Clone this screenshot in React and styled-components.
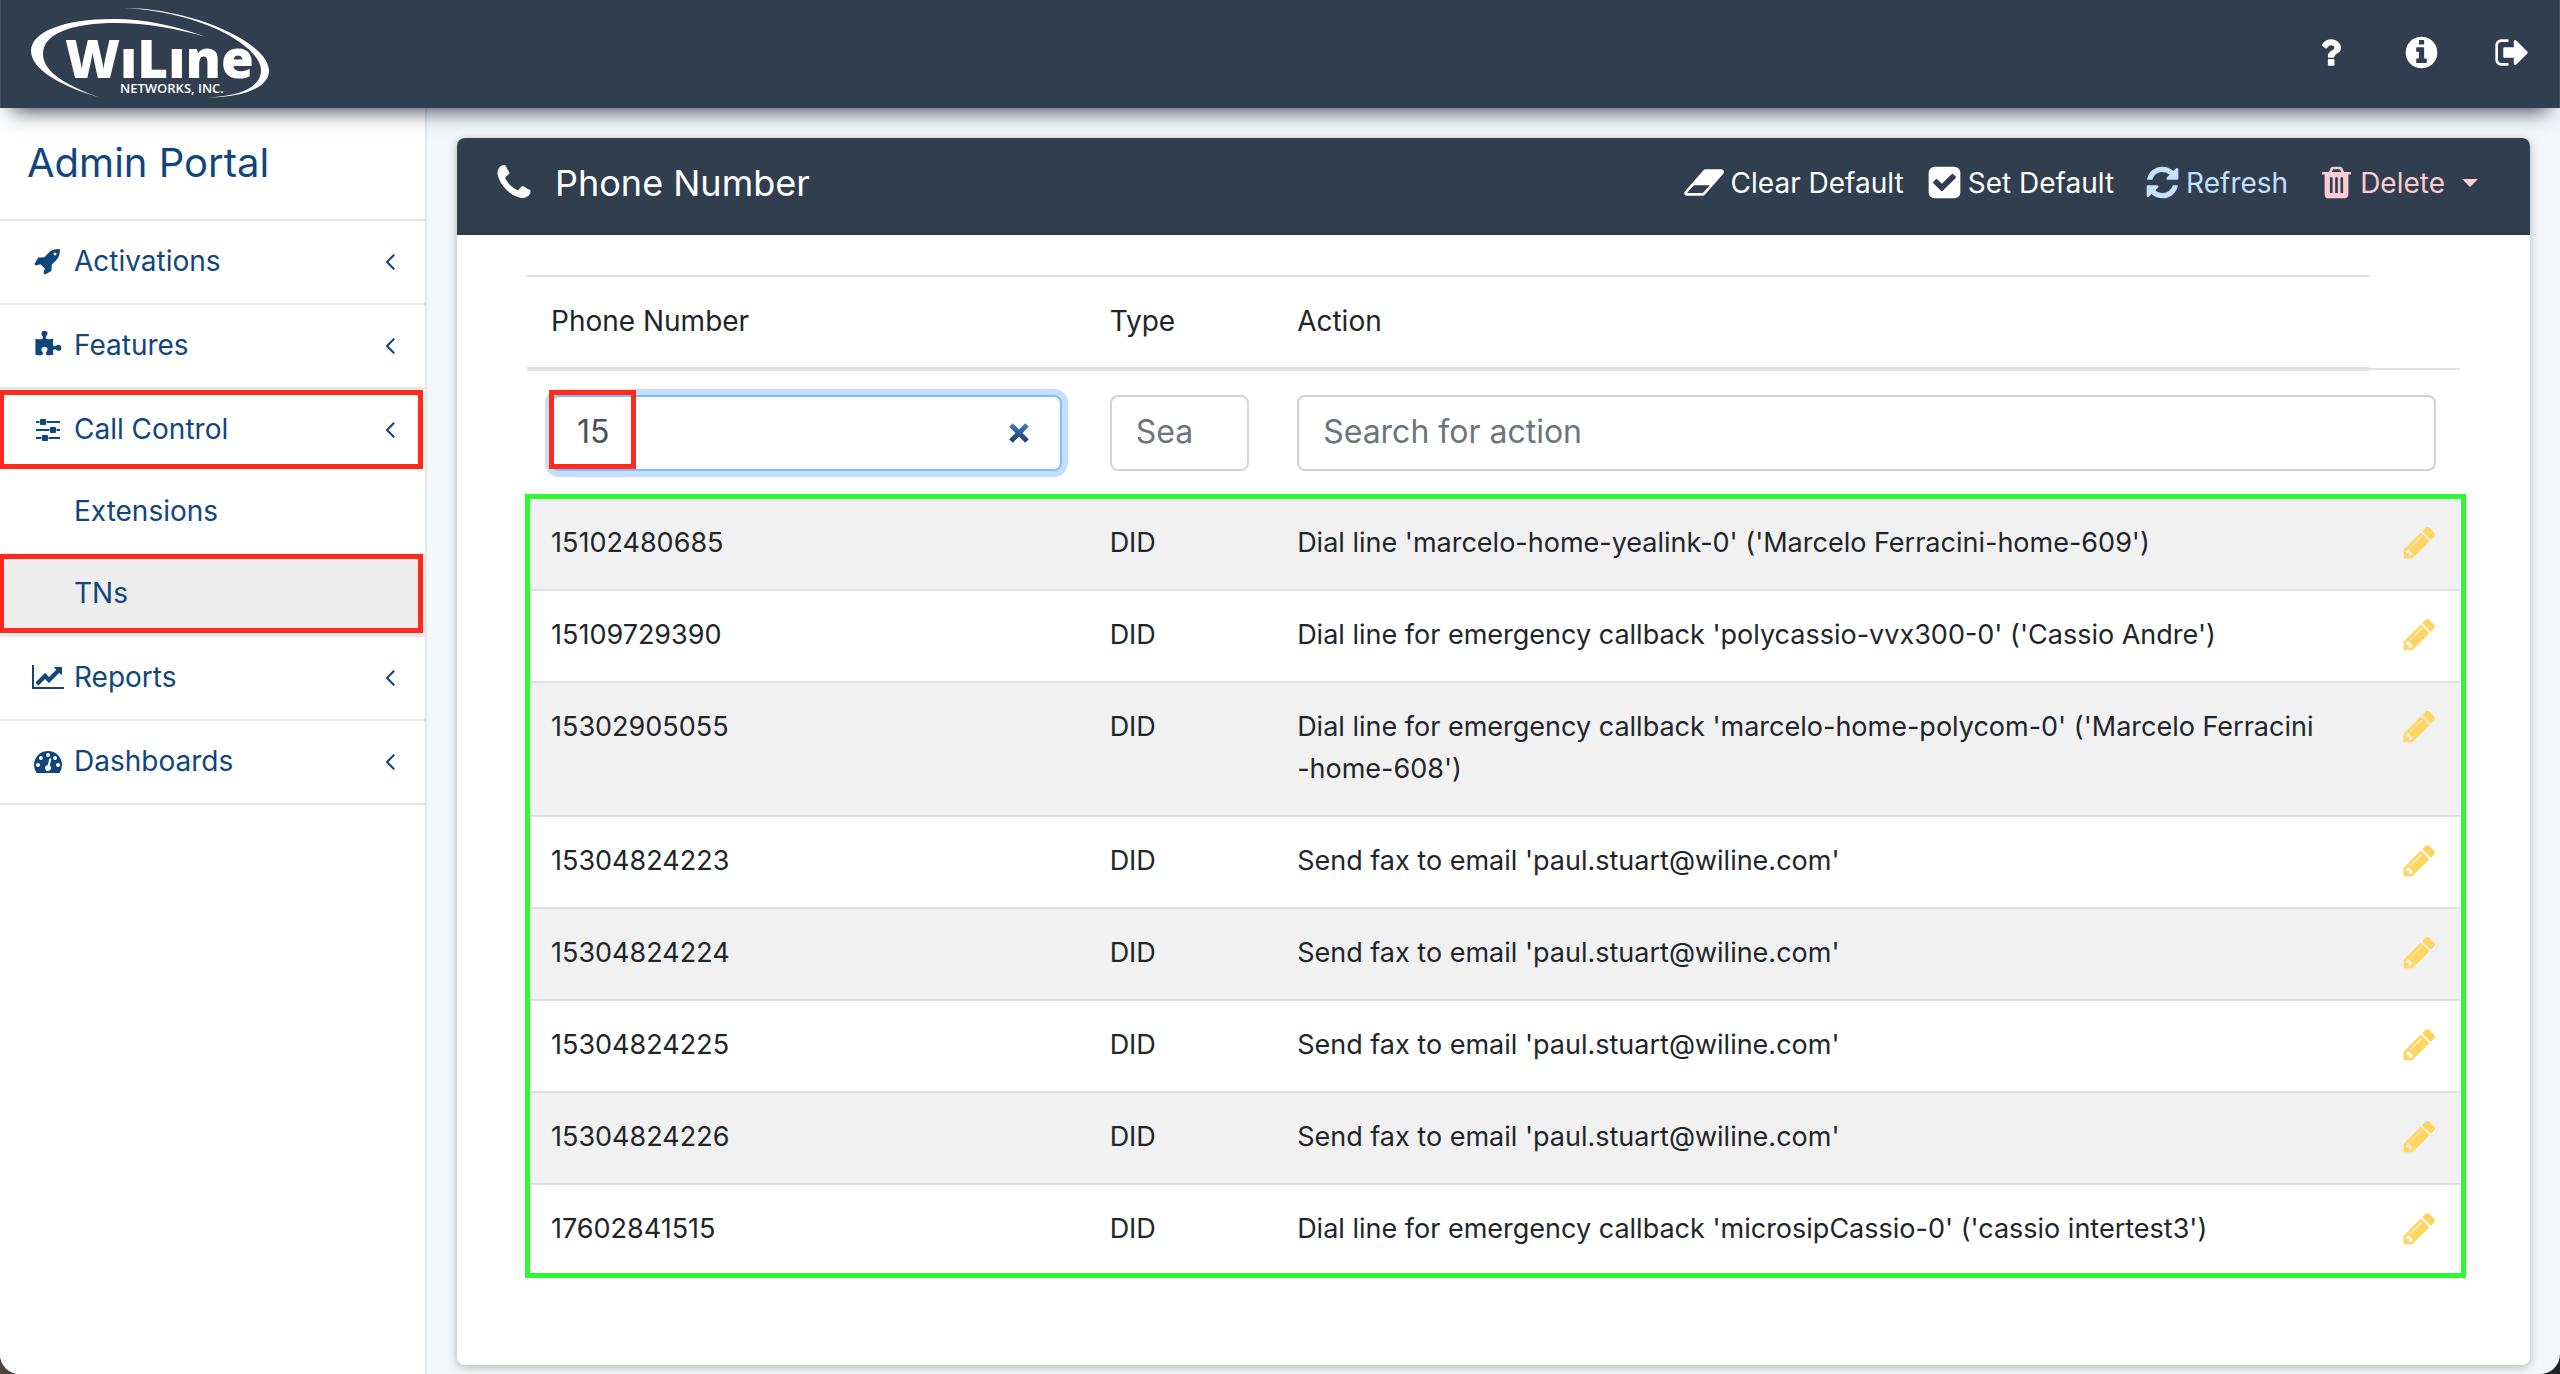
import React, { useState } from 'react'
import styled, { createGlobalStyle, css } from 'styled-components'

const NAVY = '#303e4f'
const BLUE = '#11457e'
const INK = '#212529'
const LINE = '#dee2e6'
const RED = '#ff2a1c'
const GREEN = '#2bfa2e'

const GlobalStyle = createGlobalStyle`
  *, *::before, *::after {
    box-sizing: border-box;
  }

  html {
    background: linear-gradient(90deg, #4b443f, #232425);
  }

  body {
    margin: 0;
    color: ${INK};
    font-family: Inter, "Liberation Sans", sans-serif;
    font-size: 28px;
    line-height: 42px;
  }

  button, input {
    font: inherit;
  }
`

// glyphs are drawn on a 1792 unit em, [width, path]
const glyphs = {
  question: [1792, 'M1088 1256v240q0 16-12 28t-28 12h-240q-16 0-28-12t-12-28v-240q0-16 12-28t28-12h240q16 0 28 12t12 28zm316-600q0 54-15.500 101t-35 76.500-55 59.500-57.500 43.500-61 35.500q-41 23-68.500 65t-27.500 67q0 17-12 32.500t-28 15.500h-240q-15 0-25.500-18.500t-10.500-37.500v-45q0-83 65-156.500t143-108.500q59-27 84-56t25-76q0-42-46.500-74t-107.500-32q-65 0-108 29-35 25-107 115-13 16-31 16-12 0-25-8l-164-125q-13-10-15.500-25t5.500-28q160-266 464-266 80 0 161 31t146 83 106 127.500 41 158.500z'],
  info: [1792, 'M1152 1376v-160q0-14-9-23t-23-9h-96v-512q0-14-9-23t-23-9h-320q-14 0-23 9t-9 23v160q0 14 9 23t23 9h96v320h-96q-14 0-23 9t-9 23v160q0 14 9 23t23 9h448q14 0 23-9t9-23zm-128-896v-160q0-14-9-23t-23-9h-192q-14 0-23 9t-9 23v160q0 14 9 23t23 9h192q14 0 23-9t9-23zm640 416q0 209-103 385.500t-279.500 279.500-385.500 103-385.500-103-279.500-279.500-103-385.500 103-385.500 279.500-279.500 385.500-103 385.500 103 279.500 279.500 103 385.500z'],
  signOut: [1792, 'M704 1440q0 4 1 20t.5 26.500-3 23.500-10 19.500-20.500 6.500h-320q-119 0-203.500-84.500t-84.500-203.500v-704q0-119 84.500-203.500t203.500-84.500h320q13 0 22.500 9.500t9.500 22.500q0 4 1 20t.5 26.500-3 23.500-10 19.500-20.500 6.500h-320q-66 0-113 47t-47 113v704q0 66 47 113t113 47h312l11.500 1 11.500 3 8 5.500 7 9 2 13.500zm928-544q0 26-19 45l-544 544q-19 19-45 19t-45-19-19-45v-288h-448q-26 0-45-19t-19-45v-384q0-26 19-45t45-19h448v-288q0-26 19-45t45-19 45 19l544 544q19 19 19 45z'],
  pencil: [1792, 'M491 1536l91-91-235-235-91 91v107h128v128h107zm523-928q0-22-22-22-10 0-17 7l-542 542q-7 7-7 17 0 22 22 22 10 0 17-7l542-542q7-7 7-17zm-54-192l416 416-832 832h-416v-416zm683 96q0 53-37 90l-166 166-416-416 166-165q36-38 90-38 53 0 91 38l235 234q37 39 37 91z'],
  phone: [1792, 'M1600 1240q0 27-10 70.500t-21 68.500q-21 50-122 106-94 51-186 51-27 0-52.500-3.500t-57.500-12.500-47.500-14.500-55.500-20.500-49-18q-98-35-175-83-128-79-264.500-215.500t-215.500-264.500q-48-77-83-175-3-9-18-49t-20.500-55.500-14.500-47.500-12.500-57.500-3.500-52.500q0-92 51-186 56-101 106-122 25-11 68.500-21t70.500-10q14 0 21 3 18 6 53 76 11 19 30 54t35 63.500 31 53.500q3 4 17.500 25t21.500 35.500 7 28.500q0 20-28.500 50t-62 55-62 53-28.500 46q0 9 5 22.500t8.500 20.500 14 24 11.500 19q76 137 174 235t235 174q2 1 19 11.500t24 14 20.500 8.500 22.500 5q18 0 46-28.500t53-62 55-62 50-28.500q14 0 28.500 7t35.500 21.500 25 17.500q25 15 53.500 31t63.500 35 54 30q70 35 76 53 3 7 3 21z'],
  check: [1792, 'M813 1299l614-614q19-19 19-45t-19-45l-102-102q-19-19-45-19t-45 19l-467 467-211-211q-19-19-45-19t-45 19l-102 102q-19 19-19 45t19 45l358 358q19 19 45 19t45-19zm851-883v960q0 119-84.500 203.500t-203.500 84.500h-960q-119 0-203.500-84.500t-84.500-203.500v-960q0-119 84.500-203.500t203.500-84.500h960q119 0 203.500 84.500t84.500 203.500z'],
  refresh: [1792, 'M1639 1056q0 5-1 7-64 268-268 434.500t-478 166.500q-146 0-282.500-55t-243.500-157l-129 129q-19 19-45 19t-45-19-19-45v-448q0-26 19-45t45-19h448q26 0 45 19t19 45-19 45l-137 137q71 66 161 102t187 36q134 0 250-65t186-179q11-17 53-117 8-23 30-23h192q13 0 22.500 9.500t9.500 22.500zm25-800v448q0 26-19 45t-45 19h-448q-26 0-45-19t-19-45 19-45l138-138q-148-137-349-137-134 0-250 65t-186 179q-11 17-53 117-8 23-30 23h-199q-13 0-22.500-9.500t-9.500-22.500v-7q65-268 270-434.500t480-166.500q146 0 284 55.500t245 156.500l130-129q19-19 45-19t45 19 19 45z'],
  eraser: [2048, 'M960 1408l336-384h-768l-336 384h768zm1013-1077q15 34 9.500 71.500t-30.500 65.500l-896 1024q-38 44-96 44h-768q-38 0-69.500-20.500t-47.500-54.500q-15-34-9.500-71.500t30.500-65.500l896-1024q38-44 96-44h768q38 0 69.500 20.500t47.500 54.500z'],
  trash: [1792, 'M704 1376v-704q0-14-9-23t-23-9h-64q-14 0-23 9t-9 23v704q0 14 9 23t23 9h64q14 0 23-9t9-23zm256 0v-704q0-14-9-23t-23-9h-64q-14 0-23 9t-9 23v704q0 14 9 23t23 9h64q14 0 23-9t9-23zm256 0v-704q0-14-9-23t-23-9h-64q-14 0-23 9t-9 23v704q0 14 9 23t23 9h64q14 0 23-9t9-23zm-544-992h448l-48-117q-7-9-17-11h-317q-10 2-17 11zm928 32v64q0 14-9 23t-23 9h-96v948q0 83-47 143.500t-113 60.500h-832q-66 0-113-58.500t-47-141.500v-952h-96q-14 0-23-9t-9-23v-64q0-14 9-23t23-9h309l70-167q15-37 54-63t79-26h320q40 0 79 26t54 63l70 167h309q14 0 23 9t9 23z'],
  chart: [2048, 'M2048 1536v128h-2048v-1536h128v1408h1920zm-128-1248v435q0 21-19.500 29.500t-35.500-7.500l-121-121-633 633q-10 10-23 10t-23-10l-233-233-416 416-192-192 585-585q10-10 23-10t23 10l233 233 464-464-121-121q-16-16-7.500-35.500t29.500-19.500h435q14 0 23 9t9 23z'],
  rocket: [1792, 'M1440 448q0-40-28-68t-68-28-68 28-28 68 28 68 68 28 68-28 28-68zm224-288q0 249-75.500 430.500t-253.500 360.500q-81 80-195 176l-20 379q-2 16-16 26l-384 224q-7 4-16 4-12 0-23-9l-64-64q-13-14-8-32l85-276-281-281-276 85q-3 1-9 1-14 0-23-9l-64-64q-17-19-5-39l224-384q10-14 26-16l379-20q96-114 176-195 188-187 358-258t431-71q14 0 24 9.500t10 22.500z'],
  sliders: [1536, 'M352 1408v128h-352v-128h352zm352-128q26 0 45 19t19 45v256q0 26-19 45t-45 19h-256q-26 0-45-19t-19-45v-256q0-26 19-45t45-19h256zm160-384v128h-864v-128h864zm-640-512v128h-224v-128h224zm1312 1024v128h-736v-128h736zm-960-1152q26 0 45 19t19 45v256q0 26-19 45t-45 19h-256q-26 0-45-19t-19-45v-256q0-26 19-45t45-19h256zm640 512q26 0 45 19t19 45v256q0 26-19 45t-45 19h-256q-26 0-45-19t-19-45v-256q0-26 19-45t45-19h256zm320 128v128h-224v-128h224zm0-512v128h-864v-128h864z'],
  gauge: [1792, 'M384 1152q0-53-37.500-90.500t-90.500-37.500-90.500 37.500-37.500 90.500 37.500 90.500 90.500 37.500 90.500-37.500 37.500-90.500zm192-448q0-53-37.500-90.500t-90.500-37.500-90.500 37.500-37.500 90.500 37.500 90.500 90.500 37.500 90.500-37.500 37.500-90.500zm428 481l101-382q6-26-7.500-48.500t-38.500-29.500-48 6.500-30 39.500l-101 382q-60 5-107 43.500t-63 98.500q-20 77 20 146t117 89 146-20 89-117q16-60-6-117t-72-91zm660-33q0-53-37.500-90.500t-90.500-37.500-90.500 37.500-37.500 90.500 37.500 90.500 90.500 37.500 90.500-37.500 37.500-90.500zm-640-640q0-53-37.500-90.500t-90.500-37.500-90.500 37.500-37.500 90.500 37.500 90.500 90.500 37.500 90.500-37.500 37.500-90.500zm448 192q0-53-37.500-90.500t-90.500-37.500-90.500 37.500-37.500 90.500 37.500 90.500 90.500 37.500 90.500-37.500 37.500-90.500zm320 448q0 261-141 483-19 29-54 29h-1402q-35 0-54-29-141-221-141-483 0-182 71-348t191-286 286-191 348-71 348 71 286 191 191 286 71 348z'],
  puzzle: [1792, 'M1755 1083q0 81-44.500 135t-123.500 54q-41 0-77.500-17.500t-59-38-56.500-38-71-17.500q-110 0-110 124 0 39 16 115t15 115v5q-22 0-33 1-34 3-97.500 11.500t-115.500 13.500-98 5q-61 0-103-26.500t-42-83.500q0-37 17.500-71t38-56.500 38-59 17.500-77.500q0-79-54-123.500t-135-44.500q-84 0-143 45.500t-59 127.500q0 43 15 83t33.500 64.500 33.500 53 15 50.500q0 45-46 89-37 35-117 35-95 0-245-24-9-2-27.500-4t-27.500-4l-13-2q-1 0-3-1-2 0-2-1v-1024q2 1 17.500 3.500t34 5 21.500 3.500q150 24 245 24 80 0 117-35 46-44 46-89 0-22-15-50.500t-33.500-53-33.500-64.500-15-83q0-82 59-127.500t144-45.500q80 0 134 44.500t54 123.500q0 41-17.500 77.500t-38 59-38 56.500-17.500 71q0 57 42 83.500t103 26.500q64 0 180-15t163-17v2q-1 2-3.500 17.500t-5 34-3.500 21.500q-24 150-24 245 0 80 35 117 44 46 89 46 22 0 50.500-15t53-33.500 64.500-33.500 83-15q82 0 127.500 59t45.500 143z'],
  angleLeft: [1792, 'M1203 544q0 13-10 23l-393 393 393 393q10 10 10 23t-10 23l-50 50q-10 10-23 10t-23-10l-466-466q-10-10-10-23t10-23l466-466q10-10 23-10t23 10l50 50q10 10 10 23z'],
}

const Glyph = styled.svg`
  display: block;
  flex: none;
  height: ${({ $size }) => $size}px;
  fill: currentColor;
`

const Icon = ({ name, size = 28 }) => {
  const [width, path] = glyphs[name]
  return (
    <Glyph $size={size} viewBox={`0 0 ${width} 1792`} aria-hidden="true">
      <path d={path} />
    </Glyph>
  )
}

const Shell = styled.div`
  display: flex;
  flex-direction: column;
  min-height: 100vh;
  overflow: hidden;
  border-radius: 0 0 20px 20px;
  background: #f3f7fa;
`

const TopBar = styled.header`
  position: relative;
  z-index: 2;
  display: flex;
  justify-content: space-between;
  align-items: center;
  height: 108px;
  padding: 0 28px 4px;
  border: solid #46535f;
  border-width: 0 1px;
  background: ${NAVY};
  box-shadow: 0 14px 20px -12px rgba(20, 32, 50, 0.9);
`

const LogoLink = styled.a`
  color: #fff;

  > svg {
    display: block;
  }
`

const TopActions = styled.div`
  display: flex;
  gap: 54px;
`

const IconButton = styled.button`
  display: flex;
  padding: 0;
  border: 0;
  background: none;
  color: ${({ $color }) => $color || '#fff'};
  cursor: pointer;
`

const Columns = styled.div`
  display: flex;
  flex: 1;
`

const Sidebar = styled.nav`
  flex: none;
  width: 427px;
  overflow: hidden;
  border-right: 2px solid #e6e6e6;
  background: #fff;
  color: ${BLUE};
`

const PortalTitle = styled.h1`
  margin: 0;
  padding: 27px 27px 28px;
  font-size: 40px;
  font-weight: 400;
  line-height: 56px;
`

const Menu = styled.ul`
  margin: 0;
  padding: 0;
  list-style: none;
`

const MenuGroup = styled.li`
  border-top: 2px solid #e6e6e6;

  &:last-child {
    border-bottom: 2px solid #e6e6e6;
  }
`

const marked = css`
  position: relative;

  &::after {
    content: '';
    position: absolute;
    inset: 1px 2px 2px -1px;
    border: 5px solid ${RED};
  }
`

const MenuToggle = styled.button`
  display: flex;
  align-items: center;
  gap: 8px;
  width: 100%;
  height: 82px;
  padding: 0 21px 2px 30px;
  border: 0;
  background: none;
  color: inherit;
  text-align: left;
  cursor: pointer;
  ${({ $marked }) => $marked && marked}
`

const IconSlot = styled.span`
  display: flex;
  justify-content: center;
  width: 36px;
`

const MenuLabel = styled.span`
  flex: 1;
`

const MenuLink = styled.a`
  display: flex;
  align-items: center;
  height: 82px;
  padding: 0 21px 2px 74px;
  background: ${({ $active }) => ($active ? '#eee' : 'none')};
  color: inherit;
  text-decoration: none;
  ${({ $active }) => $active && marked}
`

const Main = styled.main`
  display: flex;
  flex: 1;
  min-width: 0;
  padding: 30px 30px 9px;
`

const Card = styled.section`
  flex: 1;
  min-width: 0;
  border-radius: 8px;
  background: #fff;
  box-shadow: 0 2px 10px rgba(0, 0, 0, 0.28);
`

const CardHeader = styled.header`
  display: flex;
  justify-content: space-between;
  align-items: center;
  height: 97px;
  padding: 0 52px 6px 36px;
  border-bottom: 2px solid #2b3848;
  border-radius: 8px 8px 0 0;
  background: ${NAVY};
  color: #fff;
`

const CardTitle = styled.h2`
  display: flex;
  align-items: center;
  gap: 20px;
  margin: 0;
  font-size: 36px;
  font-weight: 400;
`

const Toolbar = styled.div`
  display: flex;
  align-items: center;
  gap: 30px;
`

const ToolGroup = styled.div`
  display: flex;
  gap: 22px;
`

const ToolButton = styled.button`
  display: flex;
  align-items: center;
  gap: 5px;
  padding: 0;
  border: 0;
  background: none;
  color: ${({ $color }) => $color || '#fff'};
  cursor: pointer;
`

const Caret = styled.span`
  margin-left: 12px;
  border: 8px solid transparent;
  border-top-color: currentColor;
  border-bottom: 0;
`

const CardBody = styled.div`
  padding: 40px 70px 80px;
`

const Table = styled.table`
  width: 100%;
  border-collapse: collapse;
  table-layout: fixed;
`

const Col = styled.col`
  width: ${({ $width }) => $width};
`

const HeadCell = styled.th`
  padding: 23px 24px 25px;
  border-top: 2px solid ${LINE};
  border-bottom: 4px solid ${LINE};
  font-weight: 400;
  text-align: left;
`

const FilterCell = styled.td`
  padding: 24px 24px 26px;
  border-top: 2px solid ${LINE};
`

const Cell = styled.td`
  padding: 23px 24px 25px;
  border-top: 2px solid ${LINE};
  font-size: 27px;
  vertical-align: top;
  white-space: pre-line;
`

const Results = styled.tbody`
  position: relative;

  > tr:nth-child(odd) {
    background: #f1f1f1;
  }

  &::after {
    content: '';
    position: absolute;
    inset: -4px -6px -3px -2px;
    border: 5px solid ${GREEN};
    pointer-events: none;
  }
`

const Field = styled.div`
  position: relative;
  display: flex;
  align-items: center;
`

const FieldMark = styled.span`
  position: absolute;
  inset: -5px auto 2px -2px;
  width: 87px;
  border: 5px solid ${RED};
  pointer-events: none;
`

const Search = styled.input`
  width: 100%;
  height: 76px;
  padding: 0 24px 4px;
  border: 2px solid ${({ $active }) => ($active ? '#80bdff' : '#ced4da')};
  border-radius: 8px;
  outline: 0;
  background: #fff;
  box-shadow: ${({ $active }) => ($active ? '0 0 0 6px #c3deff' : 'none')};
  color: #495057;
  font-size: 32px;

  &::placeholder {
    color: #6c757d;
    opacity: 1;
  }
`

const ClearButton = styled(IconButton)`
  position: absolute;
  right: 32px;
`

const EditButton = styled(IconButton)`
  margin: 2px 0 0 8px;
`

const menu = [
  { label: 'Activations', icon: 'rocket' },
  { label: 'Features', icon: 'puzzle' },
  { label: 'Call Control', icon: 'sliders', items: ['Extensions', 'TNs'] },
  { label: 'Reports', icon: 'chart' },
  { label: 'Dashboards', icon: 'gauge' },
]

const numbers = [
  ['15102480685', 'DID', "Dial line 'marcelo-home-yealink-0' ('Marcelo Ferracini-home-609')"],
  ['15109729390', 'DID', "Dial line for emergency callback 'polycassio-vvx300-0' ('Cassio Andre')"],
  ['15302905055', 'DID', "Dial line for emergency callback 'marcelo-home-polycom-0' ('Marcelo Ferracini\n-home-608')"],
  ['15304824223', 'DID', "Send fax to email 'paul.stuart@wiline.com'"],
  ['15304824224', 'DID', "Send fax to email 'paul.stuart@wiline.com'"],
  ['15304824225', 'DID', "Send fax to email 'paul.stuart@wiline.com'"],
  ['15304824226', 'DID', "Send fax to email 'paul.stuart@wiline.com'"],
  ['17602841515', 'DID', "Dial line for emergency callback 'microsipCassio-0' ('cassio intertest3')"],
]

const Logo = () => (
  <svg width="242" height="96" viewBox="28 4 242 96" fill="currentColor" role="img" aria-label="WiLine Networks, Inc.">
    <path d="M205 37C175 26 145 19 113 19C62 19 30 32 30 51C30 70 62 87 100 98C66 86 42 72 42 54C42 33 72 23 115 23C145 23 178 29 205 37Z" />
    <path d="M123 8C190 8 268 42 268 71C268 88 240 98 206 97.500C240 96 260 87 260 70C260 48 205 12 123 8Z" />
    <text x="64" y="78" fontFamily="Open Sans, sans-serif" fontSize="53" fontWeight="800">WıLıne</text>
    <text x="119" y="93" fontFamily="Open Sans, sans-serif" fontSize="13" fontWeight="600">NETWORKS, INC.</text>
  </svg>
)

const ClearMark = () => (
  <svg width="22" height="22" viewBox="0 0 22 22" aria-hidden="true">
    <defs>
      <linearGradient id="clear" x1="0" y1="0" x2="0" y2="22" gradientUnits="userSpaceOnUse">
        <stop offset="0" stopColor="#4b80c4" />
        <stop offset="1" stopColor="#1d3566" />
      </linearGradient>
    </defs>
    <path d="M3 3L19 19M19 3L3 19" stroke="url(#clear)" strokeWidth="5" />
  </svg>
)

const Navigation = () => (
  <Sidebar>
    <PortalTitle>Admin Portal</PortalTitle>
    <Menu>
      {menu.map(({ label, icon, items }) => (
        <MenuGroup key={label}>
          <MenuToggle $marked={Boolean(items)}>
            <IconSlot><Icon name={icon} /></IconSlot>
            <MenuLabel>{label}</MenuLabel>
            <Icon name="angleLeft" />
          </MenuToggle>
          {items && items.map(item => (
            <MenuLink key={item} href={`#${item}`} $active={item === 'TNs'}>{item}</MenuLink>
          ))}
        </MenuGroup>
      ))}
    </Menu>
  </Sidebar>
)

const NumbersTable = () => {
  const [query, setQuery] = useState('15')

  return (
    <Table>
      <colgroup>
        <Col $width="28.9%" />
        <Col $width="9.7%" />
        <Col />
        <Col $width="91px" />
      </colgroup>
      <thead>
        <tr>
          <HeadCell scope="col">Phone Number</HeadCell>
          <HeadCell scope="col">Type</HeadCell>
          <HeadCell scope="col">Action</HeadCell>
        </tr>
      </thead>
      <tbody>
        <tr>
          <FilterCell>
            <Field>
              <Search $active aria-label="Search for phone number" value={query} onChange={e => setQuery(e.target.value)} />
              <ClearButton aria-label="Clear" onClick={() => setQuery('')}><ClearMark /></ClearButton>
              <FieldMark />
            </Field>
          </FilterCell>
          <FilterCell>
            <Field><Search aria-label="Search for type" placeholder="Sea" /></Field>
          </FilterCell>
          <FilterCell colSpan={2}>
            <Field><Search aria-label="Search for action" placeholder="Search for action" /></Field>
          </FilterCell>
        </tr>
      </tbody>
      <Results>
        {numbers.map(([number, type, action]) => (
          <tr key={number}>
            <Cell>{number}</Cell>
            <Cell>{type}</Cell>
            <Cell>{action}</Cell>
            <Cell>
              <EditButton $color="#ffd55f" aria-label={`Edit ${number}`}><Icon name="pencil" size={37} /></EditButton>
            </Cell>
          </tr>
        ))}
      </Results>
    </Table>
  )
}

const App = () => (
  <>
    <GlobalStyle />
    <Shell>
      <TopBar>
        <LogoLink href="#home"><Logo /></LogoLink>
        <TopActions>
          <IconButton aria-label="Help"><Icon name="question" size={37} /></IconButton>
          <IconButton aria-label="About"><Icon name="info" size={37} /></IconButton>
          <IconButton aria-label="Sign out"><Icon name="signOut" size={37} /></IconButton>
        </TopActions>
      </TopBar>
      <Columns>
        <Navigation />
        <Main>
          <Card>
            <CardHeader>
              <CardTitle><Icon name="phone" size={42} />Phone Number</CardTitle>
              <Toolbar>
                <ToolGroup>
                  <ToolButton><Icon name="eraser" size={37} />Clear Default</ToolButton>
                  <ToolButton><Icon name="check" size={37} />Set Default</ToolButton>
                </ToolGroup>
                <ToolButton $color="#c3e0ff"><Icon name="refresh" size={37} />Refresh</ToolButton>
                <ToolButton $color="#f8ccd1"><Icon name="trash" size={37} />Delete<Caret /></ToolButton>
              </Toolbar>
            </CardHeader>
            <CardBody>
              <NumbersTable />
            </CardBody>
          </Card>
        </Main>
      </Columns>
    </Shell>
  </>
)

export default App
